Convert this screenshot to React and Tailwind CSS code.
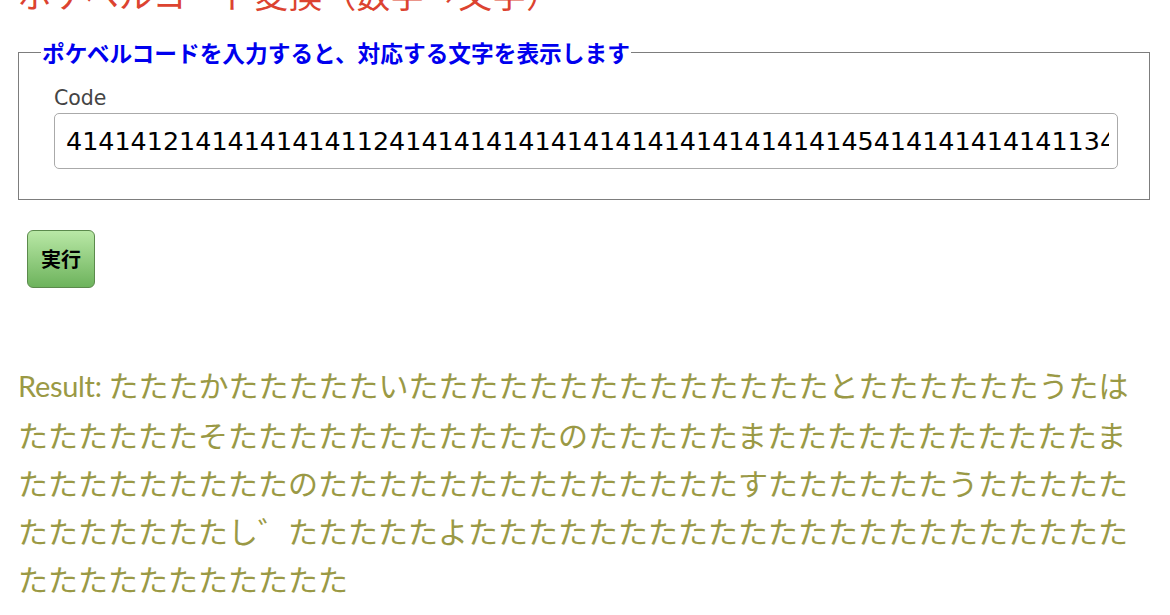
import React from "react";

const codeMap = {
  た: "41",
  か: "21",
  い: "12",
  と: "45",
  う: "13",
  は: "61",
  そ: "35",
  の: "55",
  ま: "71",
  す: "33",
  し: "32",
  "゛": "04",
  よ: "85",
};

const ta = (n) => "た".repeat(n);

const result =
  "たたたか" + "たたたたたい" + ta(14) + "と" + ta(6) + "う" + "た" + "は" +
  ta(6) + "そ" + ta(11) + "の" + ta(5) + "ま" + ta(11) + "ま" +
  ta(9) + "の" + ta(14) + "す" + ta(6) + "う" + ta(5) +
  ta(7) + "し" + "゛" + ta(5) + "よ" + ta(22) +
  ta(11);

const code = Array.from(result)
  .map((c) => codeMap[c] || "")
  .join("");

const App = () => {
  return (
    <div className="min-h-screen bg-white w-[1150px] pl-[18px] font-['Noto_Sans_CJK_JP',sans-serif]">
      <h1 className="-mt-[23px] text-[34px] leading-[34px] font-normal text-[#dc4330]">
        ポケベルコード変換（数字→文字）
      </h1>

      <fieldset className="mt-[30px] border border-[#7d7d7d] pb-[30px]">
        <legend className="ml-[22px] px-[1px] text-[22.7px] leading-[23px] font-bold text-[#0000ee]">
          ポケベルコードを入力すると、対応する文字を表示します
        </legend>
        <div className="pl-[35px] pt-[22px]">
          <label className="block text-[20.5px] leading-[24px] text-[#444] font-['DejaVu_Sans',sans-serif]">
            Code
          </label>
          <input
            type="text"
            readOnly
            value={code}
            className="mt-[3px] block w-[1064px] h-[56px] border border-[#aaaaaa] rounded-[5px] pl-[11px] pr-[8px] text-[25.4px] text-black bg-white outline-none font-['DejaVu_Sans',sans-serif]"
          />
        </div>
      </fieldset>

      <button className="mt-[30px] ml-[9px] w-[68px] h-[58px] rounded-[6px] border border-[#5b8a4c] bg-gradient-to-b from-[#b9e8a6] to-[#6db35c] text-[20px] font-bold text-black">
        実行
      </button>

      <p className="mt-[72px] w-[1132px] text-[30px] leading-[48px] text-[#9a9945] break-all">
        <span className="font-['Lato',sans-serif] text-[29px] tracking-[-0.3px]">Result:</span>{" "}
        {result}
      </p>
    </div>
  );
};

export default App;
